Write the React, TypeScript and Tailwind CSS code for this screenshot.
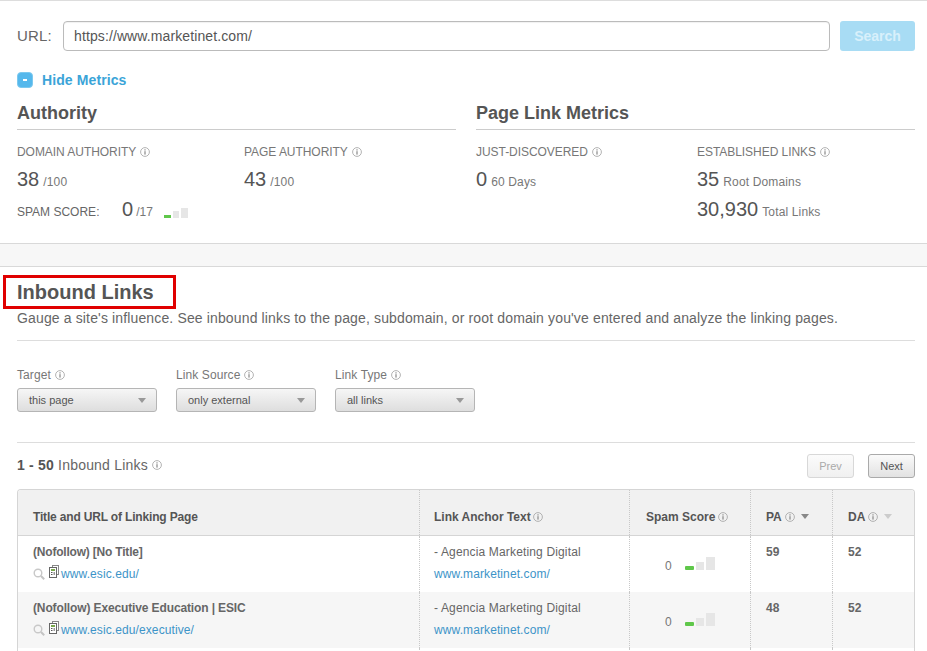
import React from "react";

const Info = ({ className = "" }: { className?: string }) => (
  <svg viewBox="0 0 10 10" className={`inline-block w-[10px] h-[10px] shrink-0 ${className}`}>
    <circle cx="5" cy="5" r="4.4" fill="none" stroke="#aaa" strokeWidth="0.9" />
    <rect x="4.4" y="4.2" width="1.2" height="3.4" fill="#888" />
    <rect x="4.4" y="2.3" width="1.2" height="1.2" fill="#888" />
  </svg>
);

const Caret = ({ color = "#999" }: { color?: string }) => (
  <svg viewBox="0 0 8 5" className="w-[8px] h-[5px] shrink-0">
    <path d="M0 0H8L4 5Z" fill={color} />
  </svg>
);

const Bars = ({ big = false }: { big?: boolean }) =>
  big ? (
    <div className="flex items-end gap-[2px]">
      <div className="w-[9px] h-[4px] bg-[#5fc74a] rounded-[1px]" />
      <div className="w-[8px] h-[8px] bg-[#e6e6e6]" />
      <div className="w-[9px] h-[13px] bg-[#e6e6e6]" />
    </div>
  ) : (
    <div className="flex items-end gap-[2px]">
      <div className="w-[7px] h-[3px] bg-[#5fc74a]" />
      <div className="w-[6px] h-[7px] bg-[#e6e6e6]" />
      <div className="w-[7px] h-[10px] bg-[#e6e6e6]" />
    </div>
  );

const Metric = ({ value, unit }: { value: string; unit: string }) => (
  <div className="flex items-baseline gap-[4px] h-[30px]">
    <span className="text-[20px] leading-[30px] text-[#555]">{value}</span>
    <span className="text-[12px] text-[#777] tracking-[0.15px]">{unit}</span>
  </div>
);

const Label = ({ children }: { children: React.ReactNode }) => (
  <div className="flex items-center gap-[4px] text-[12px] leading-[14px] text-[#777] tracking-[-0.05px]">
    {children}
    <Info />
  </div>
);

const Select = ({ label, value, cls }: { label: string; value: string; cls: string }) => (
  <div className={`w-[140px] ${cls}`}>
    <div className="flex items-center gap-[4px] h-[14px] text-[12px] leading-[14px] text-[#777] tracking-[0.1px]">
      {label}
      <Info />
    </div>
    <div className="mt-[6px] h-[24px] flex items-center justify-between pl-[11px] pr-[10px] rounded-[3px] border border-[#b5b5b5] bg-gradient-to-b from-[#f6f6f6] to-[#dedede] text-[11px] text-[#555]">
      {value}
      <Caret />
    </div>
  </div>
);

const PageIcons = () => (
  <span className="flex items-center gap-[4px] mr-[2px]">
    <svg viewBox="0 0 12 12" className="w-[12px] h-[12px]">
      <circle cx="5" cy="5" r="3.8" fill="none" stroke="#c8c8c8" strokeWidth="1.4" />
      <path d="M8 8L11.2 11.2" stroke="#c4c4c4" strokeWidth="2" />
    </svg>
    <svg viewBox="0 0 10 13" className="w-[10px] h-[13px] -mt-[5px]">
      <rect x="3.5" y="0.5" width="6" height="9" fill="#fff" stroke="#888" />
      <rect x="0.5" y="2.5" width="7" height="10" fill="#fff" stroke="#666" />
      <rect x="2" y="4" width="4" height="2" fill="#7aa84e" />
      <rect x="2" y="7" width="1.5" height="1" fill="#555" />
      <rect x="2" y="9" width="1.5" height="1" fill="#555" />
      <rect x="4.5" y="7" width="1.5" height="3" fill="#999" />
    </svg>
  </span>
);

const cell = "border-l border-dotted border-[#c8c8c8]";
const cols = "grid grid-cols-[401px_210px_121px_82px_1fr]";

const Row = ({ title, url, pa, shade, track }: { title: string; url: string; pa: string; shade?: boolean; track: string }) => (
  <div className={`${cols} h-[56px] ${shade ? "bg-[#f6f6f6]" : "bg-white"}`}>
    <div className="pl-[15px] pt-[9px]">
      <div className={`text-[12px] leading-[14px] font-bold text-[#666] ${track}`}>{title}</div>
      <div className="flex items-center mt-[8px] h-[14px]">
        <PageIcons />
        <a className="text-[12px] leading-[14px] text-[#3d94c8] tracking-[0.1px]">{url}</a>
      </div>
    </div>
    <div className={`${cell} pl-[14px] pt-[9px]`}>
      <div className="text-[12px] leading-[14px] text-[#666] tracking-[0.15px]">- Agencia Marketing Digital</div>
      <a className="block mt-[8px] text-[12px] leading-[14px] text-[#3d94c8] tracking-[0.1px]">www.marketinet.com/</a>
    </div>
    <div className={`${cell} pl-[35px] pt-[23px]`}>
      <div className="flex items-end gap-[13px] h-[14px]">
        <span className="text-[12px] leading-[14px] text-[#777]">0</span>
        <span className="mb-[3px]"><Bars big /></span>
      </div>
    </div>
    <div className={`${cell} pl-[15px] pt-[9px] text-[12px] leading-[14px] font-bold text-[#666]`}>{pa}</div>
    <div className={`${cell} pl-[15px] pt-[9px] text-[12px] leading-[14px] font-bold text-[#666]`}>52</div>
  </div>
);

export default function App() {
  return (
    <div className="relative w-[927px] h-[651px] overflow-hidden bg-white font-['Liberation_Sans',Arial,sans-serif] border-t border-[#ddd]">
      <div className="pl-[17px] pt-[20px] w-[915px]">
        <div className="flex items-center h-[30px] w-[898px]">
          <span className="w-[46px] text-[15px] tracking-[0.2px] text-[#666]">URL:</span>
          <div className="w-[767px] h-[30px] flex items-center pl-[10px] rounded-[4px] border border-[#bbb] text-[14px] tracking-[0.11px] text-[#555] shadow-[inset_0_1px_1px_rgba(0,0,0,0.06)]">
            https://www.marketinet.com/
          </div>
          <div className="ml-[10px] w-[75px] h-[30px] flex items-center justify-center rounded-[3px] bg-[#a8dcf4] text-[14px] font-bold text-[#d8f0fb]">
            Search
          </div>
        </div>

        <div className="flex items-center gap-[9px] mt-[21px] h-[16px]">
          <div className="w-[16px] h-[16px] rounded-[4px] bg-[#55b8ec] border border-[#7cc9ef] flex items-center justify-center">
            <div className="w-[4px] h-[2px] bg-white" />
          </div>
          <span className="text-[14px] font-bold text-[#3ba4d8] tracking-[0.1px]">Hide Metrics</span>
        </div>

        <div className="grid grid-cols-[439px_439px] gap-x-[20px] w-[898px] mt-[13px]">
          <div>
            <div className="h-[29px] border-b border-[#ccc] text-[18px] leading-[24px] font-bold text-[#555]">Authority</div>
            <div className="grid grid-cols-[227px_1fr] mt-[15px]">
              <Label>DOMAIN AUTHORITY</Label>
              <Label>PAGE AUTHORITY</Label>
            </div>
            <div className="grid grid-cols-[227px_1fr] mt-[5px]">
              <Metric value="38" unit="/100" />
              <Metric value="43" unit="/100" />
            </div>
            <div className="flex items-baseline h-[30px]">
              <span className="w-[105px] text-[12px] text-[#666]">SPAM SCORE:</span>
              <span className="text-[20px] leading-[30px] text-[#555]">0</span>
              <span className="ml-[3px] text-[12px] text-[#777]">/17</span>
              <span className="ml-[11px] self-end mb-[6px]"><Bars /></span>
            </div>
          </div>
          <div>
            <div className="h-[29px] border-b border-[#ccc] text-[18px] leading-[24px] font-bold text-[#555]">Page Link Metrics</div>
            <div className="grid grid-cols-[221px_1fr] mt-[15px]">
              <Label>JUST-DISCOVERED</Label>
              <Label>ESTABLISHED LINKS</Label>
            </div>
            <div className="grid grid-cols-[221px_1fr] mt-[5px]">
              <Metric value="0" unit="60 Days" />
              <div>
                <Metric value="35" unit="Root Domains" />
                <Metric value="30,930" unit="Total Links" />
              </div>
            </div>
          </div>
        </div>
      </div>

      <div className="mt-[19px] h-[24px] bg-[#f7f7f7] border-y border-[#d9d9d9]" />

      <div className="pl-[17px] w-[915px]">
        <div className="w-[898px]">
          <h2 className="mt-[14px] h-[22px] text-[20px] leading-[22px] font-bold text-[#555]">Inbound Links</h2>
          <p className="mt-[7px] h-[16px] text-[14px] leading-[16px] text-[#666] tracking-[0.14px] whitespace-nowrap">
            Gauge a site's influence. See inbound links to the page, subdomain, or root domain you've entered and analyze the linking pages.
          </p>
          <div className="mt-[14px] border-t border-[#ddd]" />

          <div className="flex mt-[27px]">
            <Select label="Target" value="this page" cls="" />
            <Select label="Link Source" value="only external" cls="ml-[19px]" />
            <Select label="Link Type" value="all links" cls="ml-[19px]" />
          </div>

          <div className="mt-[30px] border-t border-[#ddd]" />

          <div className="flex items-center justify-between mt-[11px] h-[24px]">
            <div className="flex items-center gap-[4px] mb-[2px] text-[14px] text-[#666] tracking-[0.2px]">
              <span><b className="text-[#555]">1 - 50</b> Inbound Links</span>
              <Info />
            </div>
            <div className="flex gap-[14px]">
              <div className="w-[47px] h-[24px] flex items-center justify-center rounded-[3px] border border-[#d8d8d8] bg-gradient-to-b from-[#fbfbfb] to-[#f0f0f0] text-[11px] text-[#aaa]">Prev</div>
              <div className="w-[47px] h-[24px] flex items-center justify-center rounded-[3px] border border-[#aaa] bg-gradient-to-b from-[#fafafa] to-[#e2e2e2] text-[11px] text-[#555]">Next</div>
            </div>
          </div>

          <div className="mt-[11px] rounded-t-[4px] border border-b-0 border-[#d5d5d5] overflow-hidden">
            <div className={`${cols} h-[46px] bg-[#f1f1f1] border-b border-[#d5d5d5] text-[12px] font-bold text-[#555]`}>
              <div className="pl-[15px] pt-[8px] flex items-center tracking-[-0.17px]">Title and URL of Linking Page</div>
              <div className={`${cell} pl-[14px] pt-[8px] flex items-center gap-[2px]`}>Link Anchor Text <Info /></div>
              <div className={`${cell} pl-[16px] pt-[8px] flex items-center gap-[3px]`}>Spam Score <Info /></div>
              <div className={`${cell} pl-[15px] pt-[8px] flex items-center gap-[3px]`}>PA <Info /><span className="ml-[3px]"><Caret color="#888" /></span></div>
              <div className={`${cell} pl-[15px] pt-[8px] flex items-center gap-[3px]`}>DA <Info /><span className="ml-[3px]"><Caret color="#ccc" /></span></div>
            </div>
            <Row title="(Nofollow) [No Title]" url="www.esic.edu/" pa="59" track="tracking-[-0.2px]" />
            <Row title="(Nofollow) Executive Education | ESIC" url="www.esic.edu/executive/" pa="48" shade track="tracking-[-0.13px]" />
            <div className={`${cols} h-[56px] bg-white`}>
              <div />
              <div className={cell} />
              <div className={cell} />
              <div className={cell} />
              <div className={cell} />
            </div>
          </div>
        </div>
      </div>

      <div className="absolute left-[3px] top-[274px] w-[173px] h-[34px] border-[3px] border-[#e00000]" />
    </div>
  );
}
